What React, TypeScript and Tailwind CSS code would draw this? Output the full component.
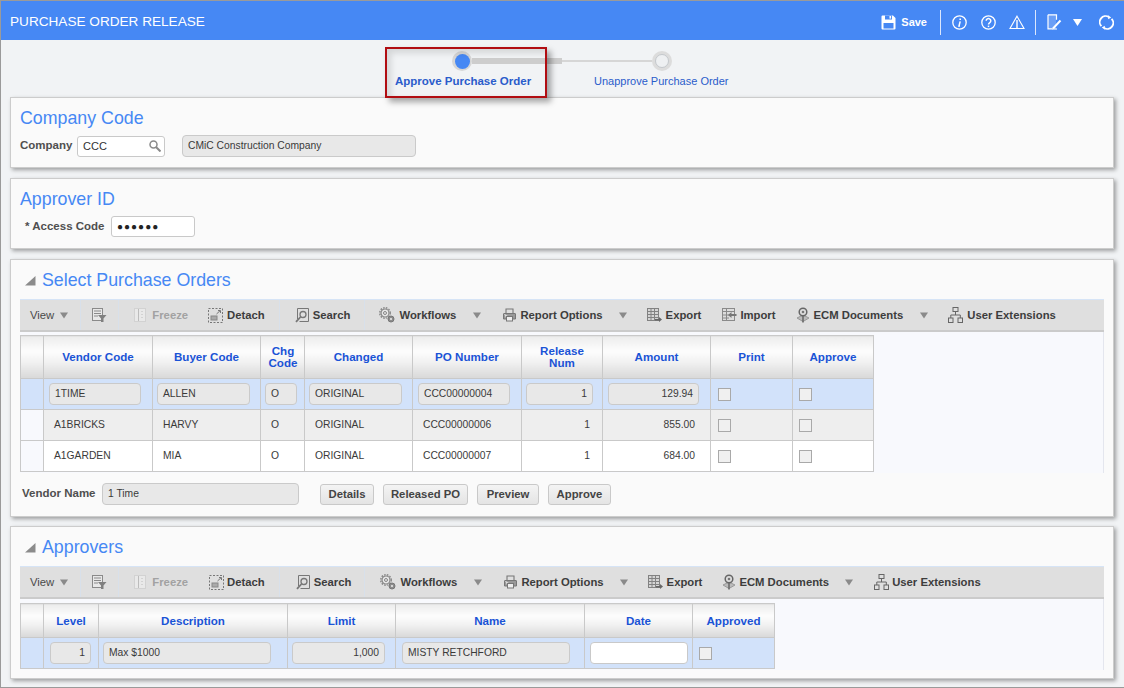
import type { ReactNode } from 'react';

type IconProps = { className?: string };

const SaveIcon = () => (
  <svg viewBox="0 0 15 15" className="h-[15px] w-[15px]">
    <path d="M0.5 1.5a1 1 0 0 1 1-1h10.5l2.5 2.5v10.5a1 1 0 0 1-1 1h-12a1 1 0 0 1-1-1z" fill="#fff" />
    <rect x="4" y="0.5" width="7" height="4" fill="#4688f4" />
    <rect x="8.5" y="1" width="1.6" height="2.6" fill="#fff" />
    <rect x="2.5" y="8" width="10" height="5.5" fill="#4688f4" />
  </svg>
);

const InfoIcon = () => (
  <svg viewBox="0 0 15 15" className="h-[15px] w-[15px]" fill="none" stroke="#fff">
    <circle cx="7.5" cy="7.5" r="6.7" strokeWidth="1.3" />
    <path d="M8.2 6.4 7 11h1" strokeWidth="1.5" />
    <path d="M8.2 3.4v1.6" strokeWidth="1.6" />
  </svg>
);

const HelpIcon = () => (
  <svg viewBox="0 0 15 15" className="h-[15px] w-[15px]" fill="none" stroke="#fff">
    <circle cx="7.5" cy="7.5" r="6.7" strokeWidth="1.3" />
    <path d="M5.2 5.8a2.3 2.2 0 1 1 3.6 1.8c-.9.6-1.3 1-1.3 2" strokeWidth="1.5" />
    <path d="M7.5 10.6v1.5" strokeWidth="1.5" />
  </svg>
);

const WarnIcon = () => (
  <svg viewBox="0 0 16 15" className="h-[15px] w-[16px]" fill="none" stroke="#fff" strokeWidth="1.1">
    <path d="M8 1.2 15 13.5H1z" />
    <path d="M8 5v8.5" strokeWidth="1.4" />
  </svg>
);

const NoteIcon = () => (
  <svg viewBox="0 0 15 16" className="h-[16px] w-[15px]" fill="none" stroke="#fff">
    <path d="M1 .8h8.5v5M1 .8v14h4.5" strokeWidth="1.2" />
    <rect x="1" y="1" width="8" height="14" fill="#fff" fillOpacity=".2" stroke="none" />
    <path d="M6 14.5 13.5 6.5" strokeWidth="2" />
    <path d="M5 15h5" strokeWidth="1" />
  </svg>
);

const SyncIcon = () => (
  <svg viewBox="0 0 15 15" className="h-[15px] w-[15px]" fill="none" stroke="#fff" strokeWidth="1.8">
    <path d="M2.4 11.2A6 6 0 0 1 9.8 1.9" />
    <path d="M12.6 3.8A6 6 0 0 1 5.2 13.1" />
    <path d="M9 .3l3.2 2.2-3 1.8zM6 14.7l-3.2-2.2 3-1.8z" fill="#fff" stroke="none" />
  </svg>
);

const ListFilterIcon = () => (
  <svg viewBox="0 0 15 14" className="h-[14px] w-[15px]" fill="none" stroke="#8a8a8a">
    <rect x="0.5" y="0.5" width="10" height="12" fill="#e8e8e8" />
    <path d="M2 3h7M2 5.5h7M2 8h4" />
    <path d="M6 7h8.5l-3 3.5V14h-2.500v-3.500z" fill="#808080" stroke="none" />
  </svg>
);

const FreezeIcon = () => (
  <svg viewBox="0 0 12 14" className="h-[14px] w-[12px]" fill="none" stroke="#d2d2d2">
    <rect x="0.5" y="0.5" width="11" height="13" fill="#e9e9e9" />
    <path d="M4.500 1v12M8 3v1M8 6v1M8 9v1" stroke="#bcbcbc" />
  </svg>
);

const DetachIcon = () => (
  <svg viewBox="0 0 15 15" className="h-[15px] w-[15px]" fill="none" stroke="#777">
    <rect x="0.5" y="0.5" width="14" height="14" strokeDasharray="2 1.500" />
    <rect x="3" y="8" width="6" height="4" stroke="#888" fill="#aaa" />
    <path d="M8.500 6 12 2.800M10 2.500h2.500V5" />
  </svg>
);

const SearchDocIcon = () => (
  <svg viewBox="0 0 14 15" className="h-[15px] w-[14px]" fill="none" stroke="#777">
    <path d="M2.500 11V.5h11v13h-9" />
    <circle cx="8" cy="6.500" r="3" strokeWidth="1.300" />
    <path d="M5.500 9 1 13.800" strokeWidth="1.800" />
  </svg>
);

const GearsIcon = () => (
  <svg viewBox="0 0 16 16" className="h-[16px] w-[16px]" fill="none" stroke="#858585">
    <circle cx="6" cy="6" r="4" strokeWidth="1.200" fill="#e8e8e8" />
    <circle cx="6" cy="6" r="5.300" strokeWidth="1.300" strokeDasharray="1.600 1.200" />
    <circle cx="6" cy="6" r="1.500" />
    <circle cx="12" cy="12" r="3" fill="#8c8c8c" stroke="#777" />
    <circle cx="12" cy="12" r="1" fill="#eee" stroke="none" />
  </svg>
);

const PrinterIcon = () => (
  <svg viewBox="0 0 13 14" className="h-[14px] w-[13px]" fill="none" stroke="#777">
    <path d="M3 5V1h7v4" strokeWidth="1.100" />
    <path d="M1 5.500h11a.500.500 0 0 1 .500.500v5h-3M3.500 11h-3V6a.500.500 0 0 1 .500-.500" fill="#999" />
    <rect x="3.500" y="8.500" width="6" height="4.500" fill="#eee" />
  </svg>
);

const ExportIcon = () => (
  <svg viewBox="0 0 15 14" className="h-[14px] w-[15px]" fill="none" stroke="#828282">
    <rect x="0.500" y="0.500" width="11" height="12" fill="#d5d5d5" />
    <path d="M0.500 3.500h11M4 1v11M7.500 1v11M1 6.500h10M1 9.500h10" />
    <path d="M8 11h4V9l3 2.500-3 2.500v-1.500H8z" fill="#666" stroke="none" />
  </svg>
);

const ImportIcon = () => (
  <svg viewBox="0 0 15 14" className="h-[14px] w-[15px]" fill="none" stroke="#8a8a8a">
    <rect x="0.500" y="0.500" width="12" height="12" fill="#ddd" />
    <path d="M0.500 3.500h12M4.500 1v11M1 7h11M1 10h6" />
    <path d="M14.500 6h-5V4L6 7l3.500 3V8h5z" fill="#777" stroke="none" />
  </svg>
);

const EcmIcon = () => (
  <svg viewBox="0 0 14 17" className="h-[17px] w-[14px]" fill="none" stroke="#666">
    <path d="M1 11l6-3 6 3-6 3.500z" fill="#bbb" stroke="#999" />
    <path d="M7 15.500V9" strokeWidth="1.500" />
    <circle cx="7" cy="5" r="3.800" strokeWidth="1.500" fill="#ddd" />
    <circle cx="7" cy="5" r="1.300" fill="#777" stroke="none" />
  </svg>
);

const TreeIcon = () => (
  <svg viewBox="0 0 15 16" className="h-[16px] w-[15px]" fill="none" stroke="#666">
    <rect x="5" y="0.500" width="5" height="4" />
    <rect x="0.500" y="11" width="4.500" height="4.500" />
    <rect x="10" y="11" width="4.500" height="4.500" />
    <path d="M7.500 4.500v3.500M2.800 11V8h9.500v3" />
  </svg>
);

const Caret = ({ className = '' }: IconProps) => (
  <svg viewBox="0 0 10 7" className={`h-[7px] w-[10px] shrink-0 ${className}`}>
    <path d="M1 0.500h8L5 6.500z" fill="#8a8a8a" />
  </svg>
);

const Divider = ({ className = '' }: IconProps) => (
  <span className={`h-full w-px shrink-0 bg-[#d8e0ea] ${className}`} />
);

function Tool({ icon, label, className = '', muted }: { icon: ReactNode; label: string; className?: string; muted?: boolean }) {
  return (
    <span className={`flex shrink-0 items-center whitespace-nowrap font-bold ${muted ? 'text-[#a2a2a2]' : 'text-[#3d3d3d]'} ${className}`}>
      {icon}
      <span>{label}</span>
    </span>
  );
}

function ToolbarStart({ second }: { second?: boolean }) {
  return (
    <>
      <span className="ml-[10px] flex items-center text-[#4a4a4a]"><span>View</span><Caret className="ml-[5px]" /></span>
      <Divider className="ml-[11px]" />
      <span className="ml-[11px] flex"><ListFilterIcon /></span>
      <Divider className="ml-[11px]" />
      <Tool muted className="ml-[15px] gap-[6px]" icon={<FreezeIcon />} label="Freeze" />
      {second ? (
        <Tool className="ml-[21px] gap-[3px]" icon={<DetachIcon />} label="Detach" />
      ) : (
        <Tool className="ml-[20px] gap-[4px]" icon={<DetachIcon />} label="Detach" />
      )}
      <Divider className="ml-[14px]" />
      <Tool className={`gap-[4px] ${second ? 'ml-[16px]' : 'ml-[15px]'}`} icon={<SearchDocIcon />} label="Search" />
      <Divider className={second ? 'ml-[13px]' : 'ml-[14px]'} />
    </>
  );
}

function Toolbar({ children }: { children: ReactNode }) {
  return (
    <div className="flex h-[33px] items-center border-t border-b-2 border-t-[#d6e4f6] border-b-[#cbcbcb] bg-[#dfdfdf] text-[11.3px]">
      {children}
    </div>
  );
}

function ReadBox({ value, className = '', right }: { value: string; className?: string; right?: boolean }) {
  return (
    <div className={`flex h-[22px] items-center rounded-[4px] border border-[#cacaca] bg-[#e8e8e8] px-[5px] text-[10.3px] text-[#3a3a3a] ${right ? 'justify-end' : ''} ${className}`}>
      {value}
    </div>
  );
}

const Check = ({ className = '' }: IconProps) => (
  <span className={`block h-[13px] w-[13px] border border-[#a9a9a9] bg-[#f0f0f0] ${className}`} />
);

function SectionTitle({ children }: { children: ReactNode }) {
  return (
    <div className="flex h-[39px] items-center pt-[2px] pl-[5px]">
      <svg viewBox="0 0 11 10" className="mr-[6px] h-[10px] w-[11px]"><path d="M10.500 0v9.500H0z" fill="#8b8b8b" /></svg>
      <span className="text-[17.8px] text-[#4688f4]">{children}</span>
    </div>
  );
}

const th = 'border border-[#c9c9c9] bg-[linear-gradient(#ececec,#fdfdfd_35%,#f2f2f2_60%,#d8d8d8)] p-0 text-center align-middle text-[11.6px] font-bold leading-[12px] text-[#1a53d6]';
const td = 'border border-[#c9c9c9] p-0 align-middle text-[10.3px]';
const label = 'text-[11.5px] font-bold text-[#4f4f4f]';

const poHeads = ['', 'Vendor Code', 'Buyer Code', 'Chg Code', 'Changed', 'PO Number', 'Release Num', 'Amount', 'Print', 'Approve'];
const poWidths = ['w-[23px]', 'w-[109px]', 'w-[108px]', 'w-[44px]', 'w-[108px]', 'w-[109px]', 'w-[81px]', 'w-[108px]', 'w-[82px]', 'w-[81px]'];
const poRows = [
  ['A1BRICKS', 'HARVY', 'O', 'ORIGINAL', 'CCC00000006', '1', '855.00'],
  ['A1GARDEN', 'MIA', 'O', 'ORIGINAL', 'CCC00000007', '1', '684.00'],
];
const poSelected = [
  { v: '1TIME', c: 'ml-[5px] w-[92px]' },
  { v: 'ALLEN', c: 'ml-[4px] w-[93px]' },
  { v: 'O', c: 'ml-[4px] w-[32px]' },
  { v: 'ORIGINAL', c: 'ml-[4px] w-[93px]' },
  { v: 'CCC00000004', c: 'ml-[5px] w-[92px]' },
  { v: '1', c: 'ml-[4px] w-[67px]', right: true },
  { v: '129.94', c: 'ml-[5px] w-[91px]', right: true },
];

const apHeads = ['', 'Level', 'Description', 'Limit', 'Name', 'Date', 'Approved'];
const apWidths = ['w-[23px]', 'w-[55px]', 'w-[189px]', 'w-[108px]', 'w-[189px]', 'w-[108px]', 'w-[82px]'];
const apCells = [
  { v: '1', c: 'ml-[6px] w-[41px]', right: true },
  { v: 'Max $1000', c: 'ml-[4px] w-[168px]' },
  { v: '1,000', c: 'ml-[4px] w-[93px]', right: true },
  { v: 'MISTY RETCHFORD', c: 'ml-[6px] w-[168px]' },
];

export default function App() {
  return (
    <div className="h-[688px] w-[1124px] overflow-hidden border-t border-l border-b border-[#9a9a9a] bg-[#f1f3f5] font-['Liberation_Sans',Arial,sans-serif] text-[11px] text-[#3a3a3a]">
      {/* title bar */}
      <div className="flex h-[39px] items-center bg-[#4688f4] pt-[3px] pr-[10px] pl-[9px] text-white">
        <span className="text-[13.6px]">PURCHASE ORDER RELEASE</span>
        <span className="ml-auto flex items-center font-bold"><SaveIcon /><span className="ml-[5px]">Save</span></span>
        <span className="ml-[13px] h-[25px] w-px bg-white/80" />
        <span className="ml-[11px]"><InfoIcon /></span>
        <span className="ml-[14px]"><HelpIcon /></span>
        <span className="ml-[13px]"><WarnIcon /></span>
        <span className="ml-[10px] h-[25px] w-px bg-white/80" />
        <span className="ml-[11px]"><NoteIcon /></span>
        <svg viewBox="0 0 9 7" className="ml-[11px] h-[7px] w-[9px]"><path d="M0 0h9L4.500 7z" fill="#fff" /></svg>
        <span className="ml-[17px]"><SyncIcon /></span>
      </div>

      {/* train */}
      <div className="relative h-[57px] pt-[11px]">
        <div className="ml-[451px] flex items-center">
          <span className="flex h-[20px] w-[20px] items-center justify-center rounded-full bg-[#d6d6d6]">
            <span className="h-[15px] w-[15px] rounded-full bg-[#4688f4]" />
          </span>
          <span className="h-[6px] w-[90px] bg-[#cdcdcd]" />
          <span className="h-[2px] w-[90px] bg-[#d6d6d6]" />
          <span className="flex h-[20px] w-[20px] items-center justify-center rounded-full bg-[#dcdcdc]">
            <span className="h-[14px] w-[14px] rounded-full border border-[#c4c8cc] bg-[#eef0f2]" />
          </span>
        </div>
        <div className="mt-[2px] flex items-center text-[#2a5ccb]">
          <span className="ml-[394px] w-[199px] text-[11.5px] font-bold">Approve Purchase Order</span>
          <span>Unapprove Purchase Order</span>
        </div>
        <div className="pointer-events-none absolute top-[7px] left-[384px] z-10 h-[51px] w-[162px] border-2 border-[#b10d12] shadow-[4px_4px_6px_rgba(0,0,0,0.35),inset_4px_4px_6px_rgba(0,0,0,0.12)]" />
      </div>

      <div className="flex flex-col pl-[9px]">
        {/* company */}
        <div className="mb-[10px] h-[71px] w-[1104px] border border-[#cccccc] bg-[#fafafa] px-[9px] shadow-[2px_2px_4px_rgba(0,0,0,0.35)]">
          <div className="pt-[9px] text-[17.8px] leading-[22px] text-[#4688f4]">Company Code</div>
          <div className="mt-[6px] flex items-center">
            <span className={`w-[57px] ${label}`}>Company</span>
            <div className="flex h-[21px] w-[88px] items-center justify-between rounded-[3px] border border-[#c9c9c9] bg-white pr-[3px] pl-[5px] text-[#333]">
              CCC
              <svg viewBox="0 0 12 12" className="h-[12px] w-[12px]" fill="none" stroke="#8a8a8a"><circle cx="4.500" cy="4.500" r="3.500" strokeWidth="1.500" /><path d="M7 7l4.500 4.500" strokeWidth="2" /></svg>
            </div>
            <ReadBox value="CMiC Construction Company" className="ml-[17px] h-[21px] w-[234px]" />
          </div>
        </div>

        {/* approver id */}
        <div className="mb-[10px] h-[71px] w-[1104px] border border-[#cccccc] bg-[#fafafa] px-[9px] shadow-[2px_2px_4px_rgba(0,0,0,0.35)]">
          <div className="pt-[9px] text-[17.8px] leading-[22px] text-[#4688f4]">Approver ID</div>
          <div className="mt-[6px] flex items-center">
            <span className={`ml-[5px] w-[86px] ${label}`}>* Access Code</span>
            <div className="flex h-[21px] w-[84px] items-center rounded-[3px] border border-[#c9c9c9] bg-white px-[5px] text-[10px] tracking-[1px] text-[#222]">●●●●●●</div>
          </div>
        </div>

        {/* select purchase orders */}
        <div className="mb-[9px] h-[258px] w-[1104px] border border-[#cccccc] bg-[#fafafa] px-[9px] shadow-[2px_2px_4px_rgba(0,0,0,0.35)]">
          <SectionTitle>Select Purchase Orders</SectionTitle>
          <Toolbar>
            <ToolbarStart />
            <Tool className="ml-[14px] gap-[4px]" icon={<GearsIcon />} label="Workflows" />
            <Caret className="ml-[16px]" />
            <Tool className="ml-[21px] gap-[4px]" icon={<PrinterIcon />} label="Report Options" />
            <Caret className="ml-[15px]" />
            <Tool className="ml-[19px] gap-[4px]" icon={<ExportIcon />} label="Export" />
            <Tool className="ml-[21px] gap-[3px]" icon={<ImportIcon />} label="Import" />
            <Tool className="ml-[20px] gap-[4px]" icon={<EcmIcon />} label="ECM Documents" />
            <Caret className="ml-[16px]" />
            <Tool className="ml-[19px] gap-[4px]" icon={<TreeIcon />} label="User Extensions" />
          </Toolbar>
          <div className="h-[141px] border-r border-[#e4e6ee] bg-[#f8f9fd] pt-[3px]">
            <table className="w-[853px] table-fixed border-collapse">
              <colgroup>{poWidths.map((w, i) => <col key={i} className={w} />)}</colgroup>
              <thead>
                <tr className="h-[43px]">
                  {poHeads.map((h, i) => (
                    <th key={i} className={th}>
                      {h === 'Chg Code' || h === 'Release Num' ? <span className="mx-auto block w-[44px]">{h}</span> : h}
                    </th>
                  ))}
                </tr>
              </thead>
              <tbody>
                <tr className="h-[31px] bg-[#d2e2fa]">
                  <td className={td} />
                  {poSelected.map((c, i) => (
                    <td key={i} className={td}><ReadBox value={c.v} className={c.c} right={c.right} /></td>
                  ))}
                  <td className={td}><Check className="ml-[7px]" /></td>
                  <td className={td}><Check className="ml-[6px]" /></td>
                </tr>
                {poRows.map((row, r) => (
                  <tr key={r} className={`h-[31px] ${r === 0 ? 'bg-[#eeeeee]' : 'bg-white'}`}>
                    <td className={`${td} bg-[#f8f9fd]`} />
                    {row.map((v, i) => (
                      <td key={i} className={`${td} ${i === 6 ? 'pr-[15px] text-right' : i === 5 ? 'pr-[12px] text-right' : 'pl-[10px]'} text-[#3a3a3a]`}>{v}</td>
                    ))}
                    <td className={td}><Check className="ml-[7px]" /></td>
                    <td className={td}><Check className="ml-[6px]" /></td>
                  </tr>
                ))}
              </tbody>
            </table>
          </div>
          <div className="mt-[10px] flex items-center">
            <span className={`ml-[2px] w-[80px] ${label}`}>Vendor Name</span>
            <ReadBox value="1 Time" className="h-[21px] w-[197px]" />
            <div className="ml-[21px] flex gap-[9px] text-[11.3px] font-bold text-[#444]">
              {[['Details', 'w-[54px]'], ['Released PO', 'w-[85px]'], ['Preview', 'w-[62px]'], ['Approve', 'w-[63px]']].map(([b, w]) => (
                <span key={b} className={`flex h-[21px] items-center justify-center rounded-[3px] border border-[#c9c9c9] bg-[linear-gradient(#f4f4f4,#e4e4e4)] ${w}`}>{b}</span>
              ))}
            </div>
          </div>
        </div>

        {/* approvers */}
        <div className="h-[153px] w-[1104px] border border-[#cccccc] bg-[#fafafa] px-[9px] shadow-[2px_2px_4px_rgba(0,0,0,0.35)]">
          <SectionTitle>Approvers</SectionTitle>
          <Toolbar>
            <ToolbarStart second />
            <Tool className="ml-[15px] gap-[4px]" icon={<GearsIcon />} label="Workflows" />
            <Caret className="ml-[16px]" />
            <Tool className="ml-[21px] gap-[4px]" icon={<PrinterIcon />} label="Report Options" />
            <Caret className="ml-[15px]" />
            <Tool className="ml-[19px] gap-[4px]" icon={<ExportIcon />} label="Export" />
            <Tool className="ml-[20px] gap-[3px]" icon={<EcmIcon />} label="ECM Documents" />
            <Caret className="ml-[15px]" />
            <Tool className="ml-[20px] gap-[3px]" icon={<TreeIcon />} label="User Extensions" />
          </Toolbar>
          <div className="h-[71px] border-r border-[#e4e6ee] bg-[#f8f9fd] pt-[4px]">
            <table className="w-[754px] table-fixed border-collapse">
              <colgroup>{apWidths.map((w, i) => <col key={i} className={w} />)}</colgroup>
              <thead>
                <tr className="h-[34px]">{apHeads.map((h, i) => <th key={i} className={th}>{h}</th>)}</tr>
              </thead>
              <tbody>
                <tr className="h-[31px] bg-[#d2e2fa]">
                  <td className={td} />
                  {apCells.map((c, i) => (
                    <td key={i} className={td}><ReadBox value={c.v} className={c.c} right={c.right} /></td>
                  ))}
                  <td className={td}><div className="ml-[5px] h-[22px] w-[98px] rounded-[4px] border border-[#c9c9c9] bg-white" /></td>
                  <td className={td}><Check className="ml-[6px]" /></td>
                </tr>
              </tbody>
            </table>
          </div>
        </div>
      </div>
    </div>
  );
}
